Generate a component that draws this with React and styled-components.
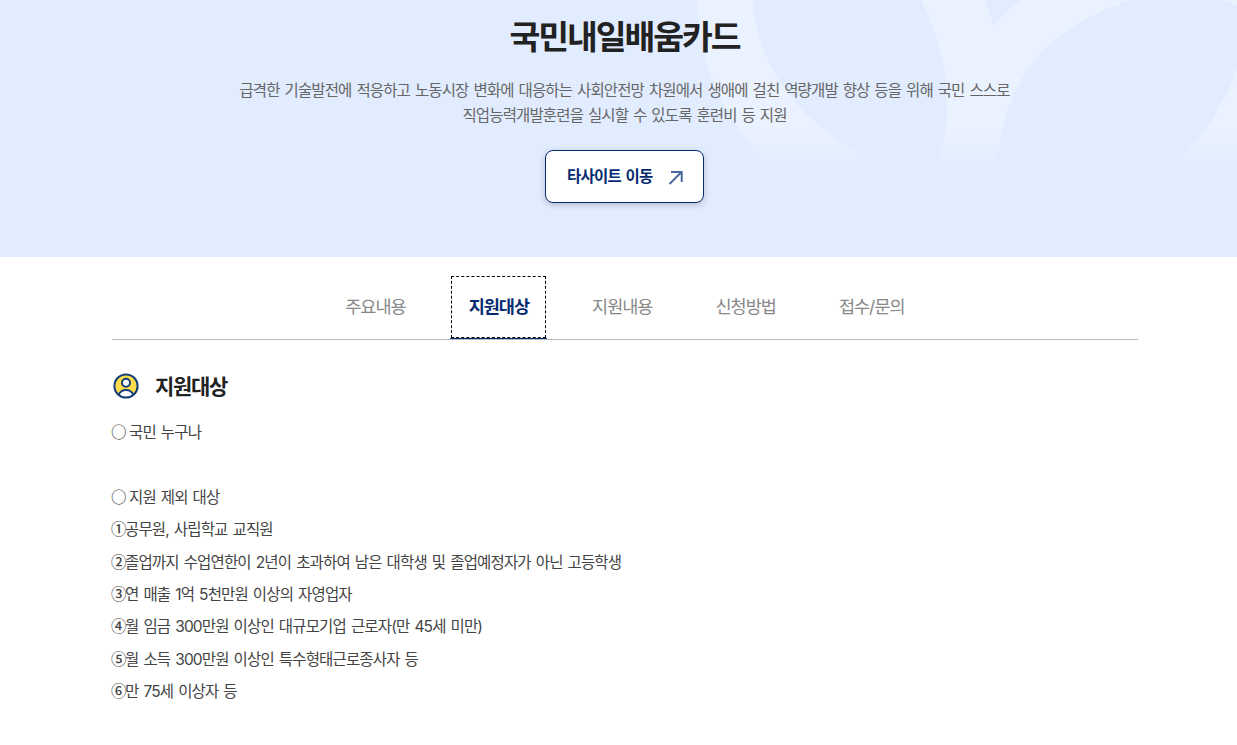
import React, { useState } from 'react';
import styled, { createGlobalStyle } from 'styled-components';

const GlobalStyle = createGlobalStyle`
  * {
    box-sizing: border-box;
  }

  body {
    margin: 0;
    background: #fff;
    color: #444;
    font-family: Inter, 'Noto Sans CJK KR', sans-serif;
    overflow: hidden;
  }
`;

const Hero = styled.header`
  position: relative;
  display: flex;
  flex-direction: column;
  align-items: center;
  height: 257px;
  padding: 13px 0 0 12px;
  background: #e1ecff;
`;

const Pattern = styled.svg`
  position: absolute;
  top: 0;
  right: 0;
`;

const Title = styled.h1`
  position: relative;
  margin: 0;
  font-size: 33.5px;
  font-weight: 700;
  line-height: 48px;
  letter-spacing: -2.1px;
  color: #222;
`;

const Summary = styled.p`
  position: relative;
  margin: 17px 0 0;
  font-size: 15.5px;
  line-height: 25px;
  letter-spacing: -0.85px;
  word-spacing: 1.35px;
  text-align: center;
  white-space: nowrap;
  color: #666;
`;

const LinkButton = styled.a`
  position: relative;
  display: flex;
  align-items: center;
  justify-content: space-between;
  width: 159px;
  height: 53px;
  margin-top: 22px;
  padding: 0 19px 0 21px;
  border: 1px solid #052b71;
  border-radius: 8px;
  background: #fff;
  box-shadow: 0 2px 6px rgba(0, 0, 0, 0.2);
  font-size: 15.5px;
  font-weight: 700;
  letter-spacing: -0.75px;
  word-spacing: 1.5px;
  color: #052b71;
  cursor: pointer;
`;

const ButtonText = styled.span`
  padding-bottom: 4px;
`;

const Container = styled.main`
  width: 1026px;
  margin-left: 112px;
`;

const TabList = styled.nav`
  display: flex;
  justify-content: center;
  gap: 26.4px;
  height: 83px;
  padding-top: 18px;
  border-bottom: 1px solid #bbb;
`;

const Tab = styled.button`
  width: ${props => props.$width || 97}px;
  height: 64px;
  padding: 0 0 3px;
  border: 0;
  border-bottom: 1px solid ${props => (props.$active ? '#052b71' : 'transparent')};
  background: none;
  font-family: inherit;
  font-size: 17.5px;
  font-weight: ${props => (props.$active ? 700 : 400)};
  letter-spacing: -1px;
  color: ${props => (props.$active ? '#052b71' : '#888')};
  outline: ${props => (props.$active ? '1px dashed #000' : 'none')};
  outline-offset: -2px;
`;

const SectionTitle = styled.h2`
  display: flex;
  align-items: center;
  gap: 15px;
  height: 30px;
  margin: 31px 0 0;
  font-size: 21px;
  font-weight: 700;
  letter-spacing: -1.3px;
  color: #222;
`;

const SectionName = styled.span`
  padding-bottom: 2px;
`;

const Details = styled.div`
  margin-top: 16px;
  font-size: 15.5px;
  line-height: 32.4px;
  letter-spacing: -0.84px;
  word-spacing: 1.45px;
`;

const Line = styled.p`
  display: flex;
  min-height: 32.4px;
  margin: 0;
`;

const Marker = styled.span`
  width: 14px;
  margin-left: -1px;
  margin-right: ${props => (props.$spaced ? '4px' : '0')};
  font-family: 'Noto Sans CJK KR', sans-serif;
  font-size: 15.5px;
  font-weight: 500;
  line-height: 29.4px;
  letter-spacing: 0;
`;

const tabs = [
  { key: 'main', name: '주요내용' },
  { key: 'target', name: '지원대상' },
  { key: 'content', name: '지원내용' },
  { key: 'apply', name: '신청방법' },
  { key: 'contact', name: '접수/문의', width: 102.5 },
];

const lines = [
  { marker: '○', text: '국민 누구나' },
  {},
  { marker: '○', text: '지원 제외 대상' },
  { marker: '①', text: '공무원, 사립학교 교직원' },
  { marker: '②', text: '졸업까지 수업연한이 2년이 초과하여 남은 대학생 및 졸업예정자가 아닌 고등학생' },
  { marker: '③', text: '연 매출 1억 5천만원 이상의 자영업자' },
  { marker: '④', text: '월 임금 300만원 이상인 대규모기업 근로자(만 45세 미만)' },
  { marker: '⑤', text: '월 소득 300만원 이상인 특수형태근로종사자 등' },
  { marker: '⑥', text: '만 75세 이상자 등' },
];

const HeroPattern = () => (
  <Pattern width="547" height="180" viewBox="690 0 547 180" aria-hidden="true">
    <defs>
      <linearGradient id="fade" x1="0" y1="0" x2="0" y2="1">
        <stop offset="0" stopColor="#eaf1ff" />
        <stop offset="0.72" stopColor="#eaf1ff" />
        <stop offset="1" stopColor="#e1ecff" />
      </linearGradient>
    </defs>
    <path
      fill="url(#fade)"
      fillRule="evenodd"
      d="M697 0C698 58 722 126 784 180H1237V0H1020Q1005 12 993 26Q990 12 985 0Z
        M753 0C756 76 818 153 932 180C955 128 952 60 921 0Z
        M997 180C996 88 1045 25 1133 0H1217Q1228 2 1237 6V69C1220 113 1194 151 1156 180Z"
    />
  </Pattern>
);

const ArrowIcon = () => (
  <svg width="16" height="16" viewBox="0 0 16 16" fill="none" stroke="#466698" strokeWidth="1.9">
    <path d="M1.5 15L13.5 3M3 3H13.7V13" />
  </svg>
);

const PersonIcon = () => (
  <svg width="28" height="28" viewBox="0 0 28 28" fill="none">
    <circle cx="14" cy="14" r="11.5" fill="#ffdc4a" />
    <path d="M7 22.5C8 18 11 17.5 14 17.5S20 18 21 22.5Q14 28 7 22.5Z" fill="#fff" />
    <circle cx="14" cy="11" r="4" fill="#fff" />
    <g stroke="#163f79" strokeWidth="2">
      <circle cx="14" cy="14" r="11.6" />
      <circle cx="14" cy="10.7" r="4" />
      <path d="M6.5 23C8 19.5 10.5 18 14 18S20 19.5 21.5 23" />
    </g>
  </svg>
);

const App = () => {
  const [active, setActive] = useState('target');

  return (
    <>
      <GlobalStyle />
      <Hero>
        <HeroPattern />
        <Title>국민내일배움카드</Title>
        <Summary>
          급격한 기술발전에 적응하고 노동시장 변화에 대응하는 사회안전망 차원에서 생애에 걸친 역량개발 향상 등을 위해 국민 스스로
          <br />
          직업능력개발훈련을 실시할 수 있도록 훈련비 등 지원
        </Summary>
        <LinkButton>
          <ButtonText>타사이트 이동</ButtonText>
          <ArrowIcon />
        </LinkButton>
      </Hero>
      <Container>
        <TabList>
          {tabs.map(tab => (
            <Tab
              key={tab.key}
              $active={tab.key === active}
              $width={tab.width}
              onClick={() => setActive(tab.key)}
            >
              {tab.name}
            </Tab>
          ))}
        </TabList>
        <SectionTitle>
          <PersonIcon />
          <SectionName>지원대상</SectionName>
        </SectionTitle>
        <Details>
          {lines.map((line, i) => (
            <Line key={i}>
              {line.marker && <Marker $spaced={line.marker === '○'}>{line.marker}</Marker>}
              <span>{line.text}</span>
            </Line>
          ))}
        </Details>
      </Container>
    </>
  );
};

export default App;
